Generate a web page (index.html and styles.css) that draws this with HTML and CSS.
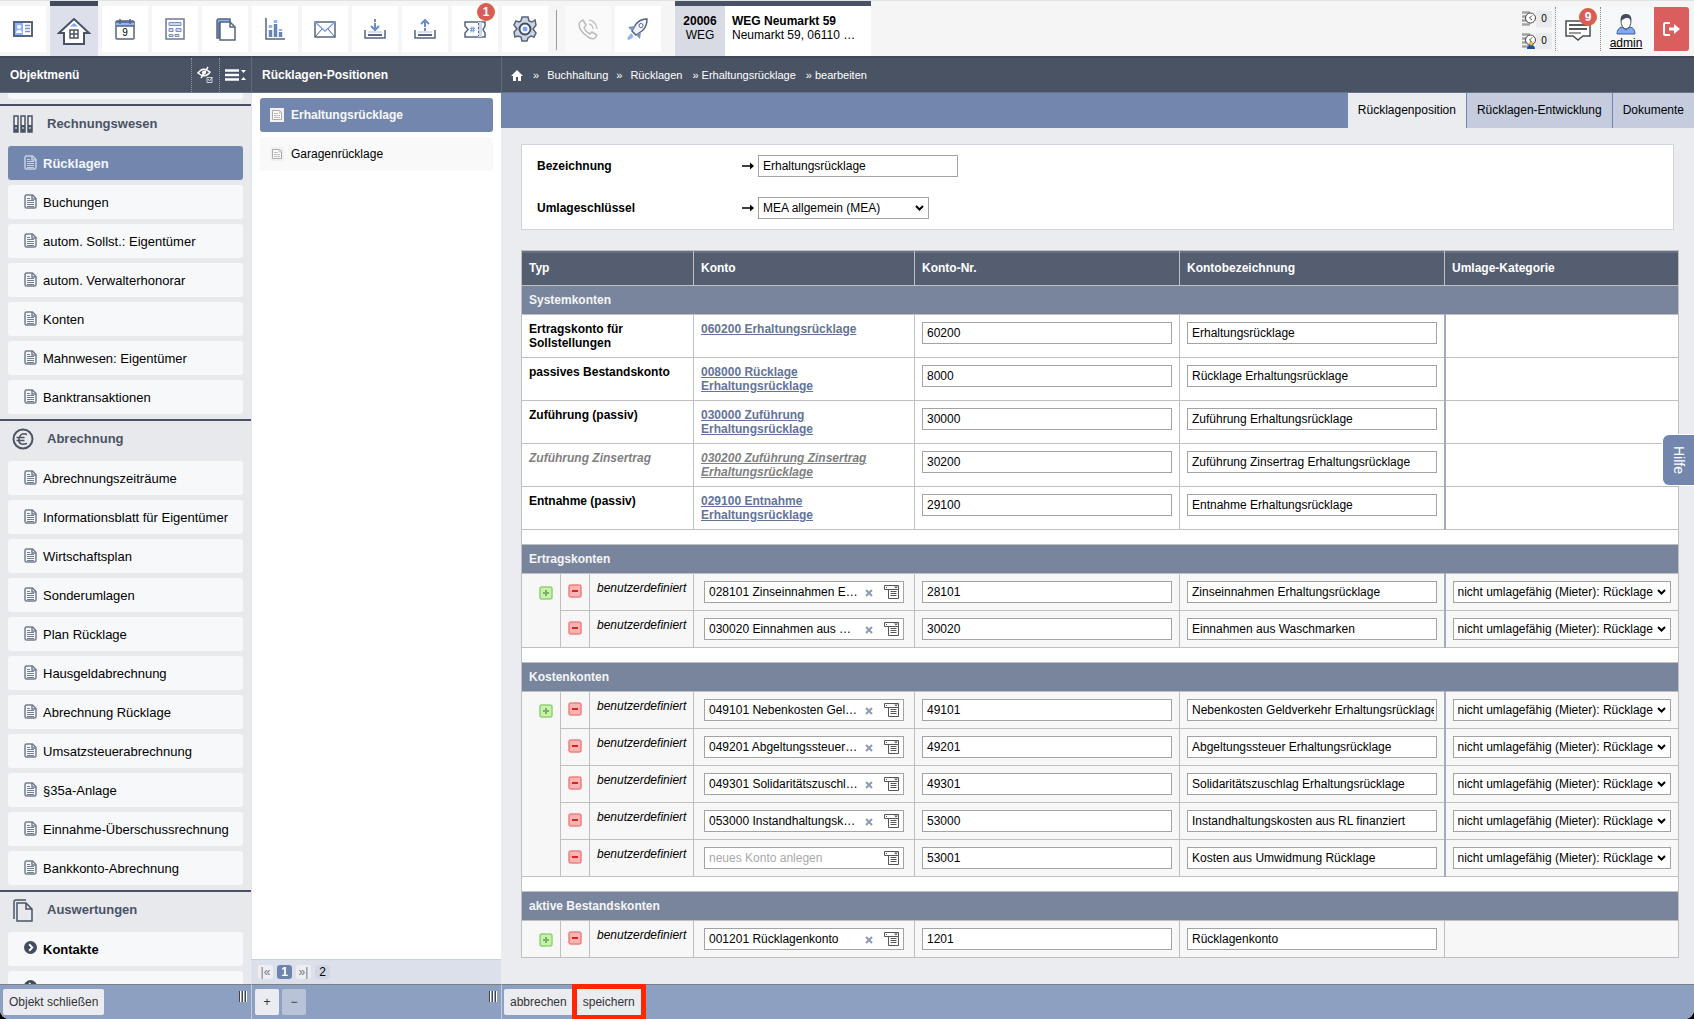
FILE: index.html
```html
<!DOCTYPE html>
<html lang="de">
<head>
<meta charset="utf-8">
<title>Rücklagen – WEG Neumarkt 59</title>
<link rel="stylesheet" href="styles.css">
</head>
<body>
<svg class="defs" aria-hidden="true">
  <symbol id="doc" viewBox="0 0 13 15"><path d="M1 2.500Q1 1 2.500 1H8.500L12 4.500V12.500Q12 14 10.500 14H2.500Q1 14 1 12.500Z" fill="none" stroke="currentColor" stroke-width="1.500"/><path d="M8 1V5H12" fill="none" stroke="currentColor" stroke-width="1.500"/><path d="M3 4.500H6M3 6.500H10M3 8.500H10M3 10.500H10M3 12.500H10" fill="none" stroke="currentColor"/></symbol>
  <symbol id="note" viewBox="0 0 14 14"><rect width="14" height="14" fill="#f1f1f1"/><path d="M2.500 2.500H9.500L11.500 4.500V11.500H2.500Z" fill="#fff" stroke="#aaa"/><path d="M4 5.500H8M4 7.500H10M4 9.500H10M9 2V5H12" stroke="#bbb" fill="none"/></symbol>
  <symbol id="plus" viewBox="0 0 14 14"><rect x="1" y="1" width="12" height="12" rx="2" fill="#c6f3a8" stroke="#93cf78" stroke-width="1.500"/><path d="M4 7H10M7 4V10" stroke="#7fae66" stroke-width="2"/></symbol>
  <symbol id="minus" viewBox="0 0 14 14"><rect x="1" y="1" width="12" height="12" rx="2" fill="#fbb4b4" stroke="#f08080" stroke-width="1.500"/><path d="M4 7H10" stroke="#e01f1f" stroke-width="2"/></symbol>
  <symbol id="x" viewBox="0 0 8 8"><path d="M1 1L7 7M7 1L1 7" stroke="#8d9bb3" stroke-width="2"/></symbol>
  <symbol id="pick" viewBox="0 0 16 14"><path d="M.5.500H14.500V4.500H.5ZM4.500 4.500V13.500H14.500V4.500M2.500 2V3M6.500 6.500H12.500M6.500 8.500H12.500M6.500 10.500H12.500" fill="none" stroke="#555"/><path d="M10 1.500H14L12 3.500Z" fill="#555"/></symbol>
  <symbol id="arrow" viewBox="0 0 12 8"><path d="M0 4H10" stroke="#000" stroke-width="1.500"/><path d="M8 .5L12 4L8 7.500Z"/></symbol>
  <symbol id="go" viewBox="0 0 14 14"><circle cx="7" cy="7" r="7" fill="#424c5e"/><path d="M5.500 3.500L9 7L5.500 10.500" fill="none" stroke="#fff" stroke-width="2"/></symbol>
  <symbol id="queue" viewBox="0 0 14 16"><path d="M0 1.500H8M0 5.500H8M0 9.500H8M0 13.500H8" stroke="#a3a3a3" stroke-width="2.500"/><circle cx="8.500" cy="7" r="5" fill="#fff" stroke="#444"/><path d="M10 4.500L7.500 7L10 9" fill="none" stroke="#444"/></symbol>
</svg>

<header class="toolbar">
  <nav class="tiles" aria-label="Hauptmenü">
    <a class="tile" href="#" title="Kontakte"><svg width="20" height="16"><rect x="1" y="1" width="18" height="14" fill="#fff" stroke="#56647c" stroke-width="2"/><path d="M2 2H10V14H2Z" fill="#8fb4ff"/><circle cx="6" cy="6" r="2" fill="#fff"/><path d="M3 12Q3 9 6 9T9 12Z" fill="#fff"/><path d="M12 4.500H17M12 7.500H17M12 10.500H17" stroke="#7b94c4" stroke-width="1.500"/></svg></a>
    <a class="tile tile--home" href="#" title="Objekte"><svg width="34" height="27"><path d="M2 15L17 1L32 15H27V26H7V15Z" fill="#fff" stroke="#4a5365" stroke-width="2"/><path d="M13 8.500L17 5L21 8.500Z" fill="#7aa5f8"/><path d="M13 12H21V20H13ZM17 12V20M13 16H21" fill="#fff" stroke="#4a5365" stroke-width="1.500"/></svg></a>
    <a class="tile" href="#" title="Kalender"><svg width="20" height="21"><rect x="1" y="2" width="18" height="18" rx="1" fill="#fff" stroke="#56647c" stroke-width="1.500"/><path d="M1 3H19V7H1Z" fill="#8fb4ff"/><path d="M1 7H19M5 0V5M15 0V5M1 3H19" stroke="#56647c" stroke-width="1.500"/><text x="10" y="17" text-anchor="middle" class="cal-num">9</text></svg></a>
    <a class="tile" href="#" title="Vorlagen"><svg width="20" height="22"><rect x="1" y="1" width="18" height="20" fill="#fff" stroke="#6d7a92" stroke-width="1.500"/><path d="M4 4.500H16V7.500H4ZM4 10.500H8V13.500H4ZM11 10.500H16V13.500H11ZM4 16.500H8V18.500H4ZM10 16.500H14V18.500H10Z" fill="#c5d7fb" stroke="#8090b0"/></svg></a>
    <a class="tile" href="#" title="Dokumente"><svg width="21" height="23"><path d="M2 20V3Q2 1 4 1H15V5H4V20Z" fill="#8fb4ff" stroke="#56647c" stroke-width="1.500"/><path d="M5 4H15L20 9V22H5Z" fill="#fff" stroke="#56647c" stroke-width="1.500"/><path d="M15 4V9H20" fill="none" stroke="#56647c" stroke-width="1.500"/></svg></a>
    <a class="tile" href="#" title="Statistik"><svg width="20" height="22"><path d="M1 0V21H20" fill="none" stroke="#56647c" stroke-width="1.500"/><path d="M5.500 12V19M10.500 6V19M15.500 14V19" stroke="#6883b5" stroke-width="3.500"/><path d="M5.500 7V10M10.500 2V5M15.500 11V13" stroke="#8fb4ff" stroke-width="3.500"/></svg></a>
    <a class="tile" href="#" title="Nachrichten"><svg width="22" height="17"><rect x="1" y="1" width="20" height="15" fill="#fff" stroke="#56647c" stroke-width="1.500"/><path d="M1 1L11 10L21 1" fill="none" stroke="#7aa0ee" stroke-width="1.500"/><path d="M1 16L8 8M21 16L14 8" stroke="#56647c"/></svg></a>
    <a class="tile" href="#" title="Import"><svg width="22" height="20"><path d="M1 11V19H21V11" fill="none" stroke="#56647c" stroke-width="1.500"/><path d="M4 16H18" stroke="#56647c" stroke-width="2"/><path d="M4 13H18" stroke="#b6bfd0"/><path d="M11 0V3M11 4V11M7 7L11 11L15 7" fill="none" stroke="#6b8cc9" stroke-width="2"/></svg></a>
    <a class="tile" href="#" title="Export"><svg width="22" height="20"><path d="M1 11V19H21V11" fill="none" stroke="#56647c" stroke-width="1.500"/><path d="M4 16H18" stroke="#56647c" stroke-width="2"/><path d="M4 13H18" stroke="#b6bfd0"/><path d="M11 12V9M11 8V1M7 5L11 1L15 5" fill="none" stroke="#6b8cc9" stroke-width="2"/></svg></a>
    <a class="tile" href="#" title="Tickets"><svg width="22" height="17"><path d="M1 1H21V5L19 8.500L21 12V16H1V12L4 8.500L1 5Z" fill="#fff" stroke="#56647c" stroke-width="1.500"/><path d="M14 1H18V16H14Z" fill="#c9d5ea"/><path d="M14.500 2V15" stroke="#56647c" stroke-dasharray="2 2"/><path d="M8 5.500L7 11.500M10 5.500L9 11.500M6 7.500H11M6 9.500H11" stroke="#6f9bf2"/></svg><span class="badge">1</span></a>
    <a class="tile" href="#" title="Einstellungen"><svg width="24" height="26"><path d="M9 1H15L16 5L19 6L22 4L23 9L20 13L23 17L21 21L18 20L15 22L14 25H9L8 21L5 20L2 21L1 16L4 13L1 9L3 5L6 6L8 5Z" fill="#ccd5e5" stroke="#56647c" stroke-width="1.500"/><circle cx="12" cy="13" r="5.500" fill="#fff" stroke="#414c5f" stroke-width="2"/><circle cx="12" cy="13" r="2.500" fill="#7aa5f8"/></svg></a>
    <span class="tile-rule"></span>
    <a class="tile tile--off" href="#" title="Telefon"><svg width="20" height="21"><path d="M2 3L5 1L8 6L6 9Q8 13 12 15L14 13L19 16L17 19Q15 21 10 18Q1 12 1 5Z" fill="none" stroke="#bbb" stroke-width="1.500"/><path d="M11 1Q18 2 19 10M11 5Q15 6 15 10" fill="none" stroke="#c4c4c4" stroke-width="1.500"/></svg></a>
    <a class="tile" href="#" title="Schnellstart"><svg width="22" height="22"><path d="M20 1Q13 1 9 6L5 13L9 17L15 13Q20 9 20 1Z" fill="#eef2f9" stroke="#56647c" stroke-width="1.500"/><circle cx="14" cy="7.500" r="2" fill="#fff" stroke="#56647c"/><path d="M8 8L1 9L4 12L6 12ZM14 14L13 21L10 18L10 16Z" fill="#7b94c4"/><path d="M5 16L1 21L6 18" stroke="#8fb4ff" stroke-width="2.500" fill="none"/></svg></a>
  </nav>
  <a class="object" href="#">
    <span class="object-id"><b>20006</b><br>WEG</span>
    <span class="object-name"><b>WEG Neumarkt 59</b><br>Neumarkt 59, 06110 …</span>
  </a>
  <div class="user-area">
    <div class="counters">
      <svg width="14" height="16"><use href="#queue"/></svg><span>0</span>
      <svg width="14" height="16"><use href="#queue"/><path d="M5 16Q5 12 9 12T13 16Z" fill="#1454a8"/><path d="M9 8L11 10.500L9 13L7 10.500Z" fill="#ffc24a" stroke="#7a5a10" stroke-width=".5"/></svg><span>0</span>
    </div>
    <a class="user-cell user-cell--msg" href="#" title="Mitteilungen"><svg width="26" height="21"><path d="M1 1H25V16H18L13 20L8 16H1Z" fill="#fff" stroke="#4d4d4d" stroke-width="1.500"/><path d="M4 5H22M4 9H22" stroke="#222" stroke-width="1.500"/><path d="M4 13H16" stroke="#777" stroke-width="1.500"/></svg><span class="badge">9</span></a>
    <a class="user-cell user-cell--admin" href="#"><svg width="20" height="21"><path d="M1 20Q1 14 6 13L10 16L14 13Q19 14 19 20Z" fill="#7fa8f8" stroke="#4a5f8c"/><path d="M5 6Q5 1 10 1T15 6Q15 14 10 15Q5 14 5 6Z" fill="#fff" stroke="#4a5365"/><path d="M5 7Q4 0 10 0T15 7Q13 3 10 4T5 7Z" fill="#424c5e"/></svg><span>admin</span></a>
    <button class="logout" type="button" title="Abmelden"><svg width="18" height="14"><path d="M7 1H2.500Q1 1 1 2.500V11.500Q1 13 2.500 13H7" fill="none" stroke="#fff" stroke-width="2"/><path d="M6 7H13" stroke="#fff" stroke-width="3"/><path d="M11 2L17 7L11 12Z" fill="#fff"/></svg></button>
  </div>
</header>

<div class="columns">
  <aside class="col menu">
    <div class="bar"><h2>Objektmenü</h2>
      <button class="bar-tool" type="button" title="Ausblenden"><svg width="17" height="18"><path d="M1 7Q6 0 13 6Q8 13 1 7ZM11 1L4 12" fill="none" stroke="#fff" stroke-width="1.500"/><circle cx="7" cy="6.500" r="2" fill="#fff"/><path d="M10 11.500H15V16.500H10ZM11 13L12.500 15L15.500 11" fill="none" stroke="#cfd3db"/></svg></button>
      <button class="bar-tool" type="button" title="Einklappen"><svg width="22" height="12"><path d="M0 1.500H14M0 6H14M0 10.500H14" stroke="#fff" stroke-width="2.500"/><path d="M16 1H21L18.500 4ZM16 11H21L18.500 8Z" fill="#fff"/></svg></button>
    </div>
    <nav class="menu-body" aria-label="Objektmenü">
      <div class="item item--cut"></div>
      <h3 class="section"><svg width="20" height="18"><path d="M1 1H5V17H1ZM8 1H12V17H8ZM15 1H19V17H15Z" fill="#eee" stroke="#4a5365" stroke-width="1.500"/><path d="M1 10H5V17H1ZM8 10H12V17H8ZM15 10H19V17H15Z" fill="#4a5365"/><path d="M2 13H4M9 13H11M16 13H18" stroke="#fff"/></svg>Rechnungswesen</h3>
      <a class="item item--on" href="#"><svg><use href="#doc"/></svg>Rücklagen</a>
      <a class="item" href="#"><svg><use href="#doc"/></svg>Buchungen</a>
      <a class="item" href="#"><svg><use href="#doc"/></svg>autom. Sollst.: Eigentümer</a>
      <a class="item" href="#"><svg><use href="#doc"/></svg>autom. Verwalterhonorar</a>
      <a class="item" href="#"><svg><use href="#doc"/></svg>Konten</a>
      <a class="item" href="#"><svg><use href="#doc"/></svg>Mahnwesen: Eigentümer</a>
      <a class="item" href="#"><svg><use href="#doc"/></svg>Banktransaktionen</a>
      <h3 class="section"><svg width="22" height="22"><circle cx="11" cy="11" r="9.500" fill="none" stroke="#4a5365" stroke-width="2"/><path d="M15 6.500Q8 4 7 11T15 15.500M4.500 9.500H12.500M4.500 12.500H12.500" fill="none" stroke="#4a5365" stroke-width="1.500"/></svg>Abrechnung</h3>
      <a class="item" href="#"><svg><use href="#doc"/></svg>Abrechnungszeiträume</a>
      <a class="item" href="#"><svg><use href="#doc"/></svg>Informationsblatt für Eigentümer</a>
      <a class="item" href="#"><svg><use href="#doc"/></svg>Wirtschaftsplan</a>
      <a class="item" href="#"><svg><use href="#doc"/></svg>Sonderumlagen</a>
      <a class="item" href="#"><svg><use href="#doc"/></svg>Plan Rücklage</a>
      <a class="item" href="#"><svg><use href="#doc"/></svg>Hausgeldabrechnung</a>
      <a class="item" href="#"><svg><use href="#doc"/></svg>Abrechnung Rücklage</a>
      <a class="item" href="#"><svg><use href="#doc"/></svg>Umsatzsteuerabrechnung</a>
      <a class="item" href="#"><svg><use href="#doc"/></svg>§35a-Anlage</a>
      <a class="item" href="#"><svg><use href="#doc"/></svg>Einnahme-Überschussrechnung</a>
      <a class="item" href="#"><svg><use href="#doc"/></svg>Bankkonto-Abrechnung</a>
      <h3 class="section"><svg width="20" height="23"><path d="M1 20V3Q1 1 3 1H13" fill="none" stroke="#4a5365" stroke-width="1.500"/><path d="M4 4H13L19 10V22H4ZM13 4V10H19" fill="none" stroke="#4a5365" stroke-width="1.500"/></svg>Auswertungen</h3>
      <a class="item item--group" href="#"><svg><use href="#go"/></svg>Kontakte</a>
      <a class="item item--group" href="#"><svg><use href="#go"/></svg>Dateien</a>
    </nav>
    <div class="foot"><button class="btn" type="button">Objekt schließen</button><span class="grip"></span></div>
  </aside>

  <section class="col list">
    <div class="bar"><h2>Rücklagen-Positionen</h2></div>
    <div class="list-body">
      <a class="entry entry--on" href="#"><svg width="14" height="14"><use href="#note"/></svg>Erhaltungsrücklage</a>
      <a class="entry" href="#"><svg width="14" height="14"><use href="#note"/></svg>Garagenrücklage</a>
    </div>
    <div class="pager"><a href="#">|«</a><a class="pager-on" href="#">1</a><a href="#">»|</a><span class="pager-total">2</span></div>
    <div class="foot"><button class="btn btn--icon" type="button">+</button><button class="btn btn--icon btn--dim" type="button">−</button><span class="grip"></span></div>
  </section>

  <main class="col main">
    <nav class="bar crumbs" aria-label="Pfad">
      <svg width="12" height="11"><path d="M6 0L12 6H10V11H7V7H5V11H2V6H0Z" fill="#fff"/></svg>
      <span>»</span><a href="#">Buchhaltung</a><span>»</span><a href="#">Rücklagen</a><a class="crumb-sub" href="#">» Erhaltungsrücklage</a><a class="crumb-sub" href="#">» bearbeiten</a>
    </nav>
    <nav class="tabs" aria-label="Ansichten">
      <a class="tab tab--on" href="#">Rücklagenposition</a><a class="tab" href="#">Rücklagen-Entwicklung</a><a class="tab" href="#">Dokumente</a>
    </nav>
    <form class="content">
      <div class="form-box">
        <label for="bez">Bezeichnung</label><svg width="12" height="8"><use href="#arrow"/></svg><input class="field" id="bez" value="Erhaltungsrücklage">
        <label for="uml">Umlageschlüssel</label><svg width="12" height="8"><use href="#arrow"/></svg><select class="field field--key" id="uml"><option>MEA allgemein (MEA)</option></select>
      </div>
      <table class="accounts">
        <colgroup><col class="c-add"><col class="c-del"><col class="c-type"><col class="c-acc"><col><col><col class="c-cat"></colgroup>
        <thead><tr><th colspan="3">Typ</th><th>Konto</th><th>Konto-Nr.</th><th>Kontobezeichnung</th><th>Umlage-Kategorie</th></tr></thead>
        <tbody class="system">
          <tr class="group"><th colspan="7">Systemkonten</th></tr>
          <tr><td colspan="3">Ertragskonto für Sollstellungen</td><td><a href="#">060200 Erhaltungsrücklage</a></td><td><input class="field" aria-label="Konto-Nr." value="60200"></td><td><input class="field" aria-label="Kontobezeichnung" value="Erhaltungsrücklage"></td><td class="cat"></td></tr>
          <tr><td colspan="3">passives Bestandskonto</td><td><a href="#">008000 Rücklage Erhaltungsrücklage</a></td><td><input class="field" aria-label="Konto-Nr." value="8000"></td><td><input class="field" aria-label="Kontobezeichnung" value="Rücklage Erhaltungsrücklage"></td><td class="cat"></td></tr>
          <tr><td colspan="3">Zuführung (passiv)</td><td><a href="#">030000 Zuführung Erhaltungsrücklage</a></td><td><input class="field" aria-label="Konto-Nr." value="30000"></td><td><input class="field" aria-label="Kontobezeichnung" value="Zuführung Erhaltungsrücklage"></td><td class="cat"></td></tr>
          <tr class="inactive"><td colspan="3">Zuführung Zinsertrag</td><td><a href="#">030200 Zuführung Zinsertrag Erhaltungsrücklage</a></td><td><input class="field" aria-label="Konto-Nr." value="30200"></td><td><input class="field" aria-label="Kontobezeichnung" value="Zuführung Zinsertrag Erhaltungsrücklage"></td><td class="cat"></td></tr>
          <tr><td colspan="3">Entnahme (passiv)</td><td><a href="#">029100 Entnahme Erhaltungsrücklage</a></td><td><input class="field" aria-label="Konto-Nr." value="29100"></td><td><input class="field" aria-label="Kontobezeichnung" value="Entnahme Erhaltungsrücklage"></td><td class="cat"></td></tr>
          <tr class="spacer"><td colspan="7"></td></tr>
        </tbody>
        <tbody class="custom">
          <tr class="group"><th colspan="7">Ertragskonten</th></tr>
          <tr><td class="add" rowspan="2"><button type="button" title="Hinzufügen"><svg><use href="#plus"/></svg></button></td><td class="del"><button type="button" title="Entfernen"><svg><use href="#minus"/></svg></button></td><td class="kind">benutzerdefiniert</td><td><div class="combo"><input aria-label="Konto" value="028101 Zinseinnahmen E…"><svg class="clear"><use href="#x"/></svg><svg class="pick"><use href="#pick"/></svg></div></td><td><input class="field" aria-label="Konto-Nr." value="28101"></td><td><input class="field" aria-label="Kontobezeichnung" value="Zinseinnahmen Erhaltungsrücklage"></td><td class="cat"><select class="field" aria-label="Umlage-Kategorie"><option>nicht umlagefähig (Mieter): Rücklage</option></select></td></tr>
          <tr><td class="del"><button type="button" title="Entfernen"><svg><use href="#minus"/></svg></button></td><td class="kind">benutzerdefiniert</td><td><div class="combo"><input aria-label="Konto" value="030020 Einnahmen aus …"><svg class="clear"><use href="#x"/></svg><svg class="pick"><use href="#pick"/></svg></div></td><td><input class="field" aria-label="Konto-Nr." value="30020"></td><td><input class="field" aria-label="Kontobezeichnung" value="Einnahmen aus Waschmarken"></td><td class="cat"><select class="field" aria-label="Umlage-Kategorie"><option>nicht umlagefähig (Mieter): Rücklage</option></select></td></tr>
          <tr class="spacer"><td colspan="7"></td></tr>
        </tbody>
        <tbody class="custom">
          <tr class="group"><th colspan="7">Kostenkonten</th></tr>
          <tr><td class="add" rowspan="5"><button type="button" title="Hinzufügen"><svg><use href="#plus"/></svg></button></td><td class="del"><button type="button" title="Entfernen"><svg><use href="#minus"/></svg></button></td><td class="kind">benutzerdefiniert</td><td><div class="combo"><input aria-label="Konto" value="049101 Nebenkosten Gel…"><svg class="clear"><use href="#x"/></svg><svg class="pick"><use href="#pick"/></svg></div></td><td><input class="field" aria-label="Konto-Nr." value="49101"></td><td><input class="field" aria-label="Kontobezeichnung" value="Nebenkosten Geldverkehr Erhaltungsrücklage"></td><td class="cat"><select class="field" aria-label="Umlage-Kategorie"><option>nicht umlagefähig (Mieter): Rücklage</option></select></td></tr>
          <tr><td class="del"><button type="button" title="Entfernen"><svg><use href="#minus"/></svg></button></td><td class="kind">benutzerdefiniert</td><td><div class="combo"><input aria-label="Konto" value="049201 Abgeltungssteuer…"><svg class="clear"><use href="#x"/></svg><svg class="pick"><use href="#pick"/></svg></div></td><td><input class="field" aria-label="Konto-Nr." value="49201"></td><td><input class="field" aria-label="Kontobezeichnung" value="Abgeltungssteuer Erhaltungsrücklage"></td><td class="cat"><select class="field" aria-label="Umlage-Kategorie"><option>nicht umlagefähig (Mieter): Rücklage</option></select></td></tr>
          <tr><td class="del"><button type="button" title="Entfernen"><svg><use href="#minus"/></svg></button></td><td class="kind">benutzerdefiniert</td><td><div class="combo"><input aria-label="Konto" value="049301 Solidaritätszuschl…"><svg class="clear"><use href="#x"/></svg><svg class="pick"><use href="#pick"/></svg></div></td><td><input class="field" aria-label="Konto-Nr." value="49301"></td><td><input class="field" aria-label="Kontobezeichnung" value="Solidaritätszuschlag Erhaltungsrücklage"></td><td class="cat"><select class="field" aria-label="Umlage-Kategorie"><option>nicht umlagefähig (Mieter): Rücklage</option></select></td></tr>
          <tr><td class="del"><button type="button" title="Entfernen"><svg><use href="#minus"/></svg></button></td><td class="kind">benutzerdefiniert</td><td><div class="combo"><input aria-label="Konto" value="053000 Instandhaltungsk…"><svg class="clear"><use href="#x"/></svg><svg class="pick"><use href="#pick"/></svg></div></td><td><input class="field" aria-label="Konto-Nr." value="53000"></td><td><input class="field" aria-label="Kontobezeichnung" value="Instandhaltungskosten aus RL finanziert"></td><td class="cat"><select class="field" aria-label="Umlage-Kategorie"><option>nicht umlagefähig (Mieter): Rücklage</option></select></td></tr>
          <tr><td class="del"><button type="button" title="Entfernen"><svg><use href="#minus"/></svg></button></td><td class="kind">benutzerdefiniert</td><td><div class="combo"><input aria-label="Konto" placeholder="neues Konto anlegen"><svg class="pick"><use href="#pick"/></svg></div></td><td><input class="field" aria-label="Konto-Nr." value="53001"></td><td><input class="field" aria-label="Kontobezeichnung" value="Kosten aus Umwidmung Rücklage"></td><td class="cat"><select class="field" aria-label="Umlage-Kategorie"><option>nicht umlagefähig (Mieter): Rücklage</option></select></td></tr>
          <tr class="spacer"><td colspan="7"></td></tr>
        </tbody>
        <tbody class="custom">
          <tr class="group"><th colspan="7">aktive Bestandskonten</th></tr>
          <tr><td class="add"><button type="button" title="Hinzufügen"><svg><use href="#plus"/></svg></button></td><td class="del"><button type="button" title="Entfernen"><svg><use href="#minus"/></svg></button></td><td class="kind">benutzerdefiniert</td><td><div class="combo"><input aria-label="Konto" value="001201 Rücklagenkonto"><svg class="clear"><use href="#x"/></svg><svg class="pick"><use href="#pick"/></svg></div></td><td><input class="field" aria-label="Konto-Nr." value="1201"></td><td><input class="field" aria-label="Kontobezeichnung" value="Rücklagenkonto"></td><td class="last"></td></tr>
        </tbody>
      </table>
    </form>
    <div class="foot foot--main"><button class="btn" type="button">abbrechen</button><button class="btn btn--save" type="button">speichern</button></div>
  </main>
</div>
<button class="help" type="button">Hilfe</button>
</body>
</html>
```
FILE: styles.css
```css
* { box-sizing: border-box; }
body {
  margin: 0;
  height: 100vh;
  display: flex;
  flex-direction: column;
  overflow: hidden;
  background: #000;
  color: #000;
  font: 12px/14px "Liberation Sans", Arial, sans-serif;
}
a { color: inherit; text-decoration: none; }
button, input, select { font: inherit; color: inherit; }
button { border: 0; padding: 0; background: none; }
h2, h3 { margin: 0; }
svg { display: block; flex: none; }
.defs { position: absolute; width: 0; height: 0; }

/* Toolbar */
.toolbar {
  flex: none;
  display: flex;
  height: 56px;
  border-top: 1px solid #dfe3e3;
  background: #f5f5f5;
}
.tiles { display: flex; gap: 4px; padding: 5px 0; }
.tile {
  position: relative;
  display: flex;
  align-items: center;
  justify-content: center;
  width: 46px;
  height: 46px;
  background: #fff;
}
.tile--home {
  width: 48px;
  height: 55px;
  margin-top: -5px;
  border-top: 5px solid #424a5c;
  background: #dde0eb;
}
.tile--off { background: #fafafa; }
.tile-rule { width: 1px; height: 40px; margin: 4px 4px 0; background: #999; }
.cal-num { font-size: 10px; }
.badge {
  position: absolute;
  top: -3px;
  right: 3px;
  width: 18px;
  height: 18px;
  border: 1px solid #e2652e;
  border-radius: 9px;
  background: #d95b5b;
  color: #fff;
  font-weight: bold;
  line-height: 16px;
  text-align: center;
}
.object {
  display: flex;
  width: 196px;
  margin-left: 14px;
  border-top: 5px solid #4a5365;
  background: #fff;
}
.object-id { width: 50px; padding-top: 8px; background: #d9dbe4; text-align: center; }
.object-name { padding: 8px 7px; white-space: nowrap; }
.user-area { display: flex; margin-left: auto; padding: 6px 5px 5px 0; height: 55px; }
.counters {
  display: grid;
  grid-template-columns: 14px 16px;
  align-content: space-between;
  padding: 4px 3px 2px 0;
}
.counters span { background: #e9eaed; font-size: 10px; line-height: 16px; text-align: center; }
.user-cell {
  position: relative;
  display: flex;
  flex-direction: column;
  align-items: center;
  border-left: 1px dotted #888;
  background: #f7f8f9;
}
.user-cell--msg { width: 45px; padding-top: 13px; }
.user-cell--msg .badge { top: 1px; }
.user-cell--admin { width: 54px; padding: 7px 3px 0 0; gap: 1px; text-decoration: underline; }
.logout {
  display: flex;
  align-items: center;
  justify-content: center;
  width: 35px;
  border-radius: 0 3px 3px 0;
  background: #db5e5e;
}

/* Columns */
.columns {
  flex: 1;
  display: grid;
  grid-template-columns: 251px 250px minmax(0, 1fr);
  min-height: 0;
  overflow: hidden;
  border-radius: 0 0 9px 9px;
}
.col { display: flex; flex-direction: column; min-height: 0; min-width: 0; }
.bar {
  flex: none;
  display: flex;
  align-items: center;
  height: 37px;
  padding-left: 10px;
  border-top: 2px solid #3f4757;
  border-bottom: 1px solid #66718c;
  background: #4a5364;
  color: #fff;
}
.bar h2 { flex: 1; font-size: 12px; }
.bar-tool {
  display: flex;
  align-items: center;
  justify-content: center;
  width: 28px;
  height: 34px;
  border-left: 1px dotted #8e99b5;
}
.bar-tool:last-child { width: 32px; }
.foot {
  flex: none;
  display: flex;
  gap: 3px;
  height: 35px;
  padding: 4px 3px;
  border-top: 1px solid #7b8186;
  background: #8ea0c1;
}
.btn { height: 26px; padding: 0 6px; border-radius: 2px; background: #ebecf1; color: #333; }
.btn--icon { width: 24px; }
.btn--dim { background: #b9c3d7; }
.grip {
  width: 8px;
  height: 11px;
  margin: 2px 1px 0 auto;
  background: repeating-linear-gradient(90deg, #444 0 1px, #fff 1px 2px, transparent 2px 3px);
}

/* Object menu */
.menu { background: #e8e9ed; }
.menu-body { flex: 1; min-height: 0; overflow: hidden; }
.section {
  display: grid;
  grid-template-columns: 47px 1fr;
  align-items: center;
  height: 42px;
  padding-bottom: 4px;
  border-top: 2px solid #4a5365;
  color: #4a5365;
  font-size: 13px;
}
.section svg { justify-self: center; margin-right: 1px; }
.item {
  display: flex;
  align-items: center;
  gap: 6px;
  height: 34px;
  margin: 0 8px 5px;
  padding: 2px 0 0 16px;
  border-radius: 3px;
  background: #f7f8fa;
  font-size: 13px;
}
.item svg { width: 13px; height: 15px; margin-bottom: 4px; color: #737e90; }
.item--on { background: #7387ae; color: #f4f6fa; font-weight: bold; }
.item--on svg { color: #c5cfe3; }
.item--group { font-weight: bold; }
.item--group svg { height: 13px; margin-bottom: 6px; }
.item--cut { height: 6px; border-radius: 0 0 3px 3px; }

/* Position list */
.list { background: #fff; }
.list .bar, .list-body, .list .foot { border-left: 1px solid #e3e5ea; }
.list .bar { border-left-color: #626b7d; }
.list .foot { border-left-color: #c3cbdc; }
.list-body { flex: 1; padding: 5px 8px 0; }
.entry {
  display: flex;
  align-items: center;
  gap: 7px;
  height: 34px;
  margin-bottom: 5px;
  padding-left: 10px;
  border-radius: 3px;
  background: #f9f9fa;
}
.entry--on { background: #7387ae; color: #f7f8fb; font-weight: bold; }
.pager {
  display: flex;
  align-items: center;
  gap: 4px;
  height: 25px;
  padding-left: 7px;
  border-top: 1px solid #ccd1de;
  background: #dce0eb;
}
.pager > * { width: 15px; border-radius: 3px; background: #eceef4; color: #777; text-align: center; }
.pager .pager-on { background: #6f84ad; color: #fff; font-weight: bold; }
.pager .pager-total { background: #d0d6e4; color: #000; }

/* Main area */
.main { background: #ebecf0; }
.crumbs { gap: 8px; padding-left: 9px; font-size: 11px; border-left: 1px solid #626b7d; }
.crumbs svg { margin-right: 2px; }
.crumb-sub { padding-left: 2px; }
.tabs { flex: none; display: flex; justify-content: flex-end; gap: 1px; height: 35px; background: #7387ae; }
.tab { padding: 10px; background: #c4ccde; }
.tab--on { background: #ebecf0; }
.content { flex: 1; min-height: 0; overflow: hidden; padding: 16px 15px 0 20px; }
.form-box {
  display: grid;
  grid-template-columns: 205px 12px 1fr;
  align-items: center;
  row-gap: 20px;
  margin: 0 5px 20px 0;
  padding: 10px 15px;
  border: 1px solid #d1d4dd;
  background: #fff;
}
.form-box label { font-weight: bold; }
.form-box .field { width: 200px; margin-left: 4px; }
.form-box .field--key { width: 171px; }
.field {
  display: block;
  width: 100%;
  height: 22px;
  padding: 0 2px 0 4px;
  border: 1px solid #a3a3a3;
  border-radius: 0;
  background-color: #fff;
}
select.field {
  appearance: none;
  background-image: url("data:image/svg+xml,%3Csvg xmlns='http://www.w3.org/2000/svg' width='9' height='6'%3E%3Cpath d='M1 1L4.500 4.500L8 1' fill='none' stroke='%23000' stroke-width='2'/%3E%3C/svg%3E");
  background-repeat: no-repeat;
  background-position: right 4px center;
}

/* Accounts table */
.accounts { width: 100%; table-layout: fixed; border-collapse: collapse; }
.accounts th, .accounts td { padding: 7px; border: 1px solid #bfbfbf; text-align: left; vertical-align: top; }
.accounts thead th { height: 35px; vertical-align: middle; background: #545e70; color: #fff; box-shadow: inset 0 2px #667082; }
.accounts .group th { height: 29px; background: #79859c; color: #f4f5f8; }
.accounts .cat { border-left: 2px solid #a0abc0; }
.c-add { width: 39px; }
.c-del { width: 29px; }
.c-type { width: 104px; }
.c-acc { width: 221px; }
.c-cat { width: 234px; }
.system td { height: 43px; background: #fff; font-weight: bold; }
.system .field { font-weight: normal; }
.system a { color: #63739a; text-decoration: underline; }
.system .inactive td, .system .inactive a { color: #808080; font-style: italic; }
.system .inactive .field { color: #000; font-style: normal; }
.accounts .spacer td { height: 15px; padding: 0; background: #fff; }
.custom td { height: 37px; background: #f7f7f7; }
.custom button { display: block; }
.custom button svg { width: 14px; height: 14px; }
.custom .add { padding: 12px 7px 0 17px; }
.custom .del { padding-top: 10px; }
.custom .kind { font-style: italic; white-space: nowrap; }
.combo {
  display: flex;
  align-items: center;
  width: 200px;
  height: 22px;
  margin-left: 3px;
  padding: 0 3px;
  border: 1px solid #a3a3a3;
  background: #fff;
}
.combo input { flex: 1; min-width: 0; border: 0; padding: 0 1px; background: none; outline: 0; }
.combo input::placeholder { color: #a9a9a9; }
.clear { width: 8px; height: 8px; margin: 2px 11px 0 4px; }
.pick { width: 16px; height: 14px; }

.foot--main { border-left: 1px solid #c3cbdc; padding-left: 2px; }
.btn--save { border-radius: 0; outline: 5px solid #ff2600; margin-left: 1px; }

.help {
  position: absolute;
  top: 434px;
  right: 0;
  width: 32px;
  height: 52px;
  border: 1px solid #fff;
  border-right: 0;
  border-radius: 7px 0 0 7px;
  background: #7387ae;
  color: #fff;
  font-size: 14px;
  writing-mode: vertical-rl;
}
```
